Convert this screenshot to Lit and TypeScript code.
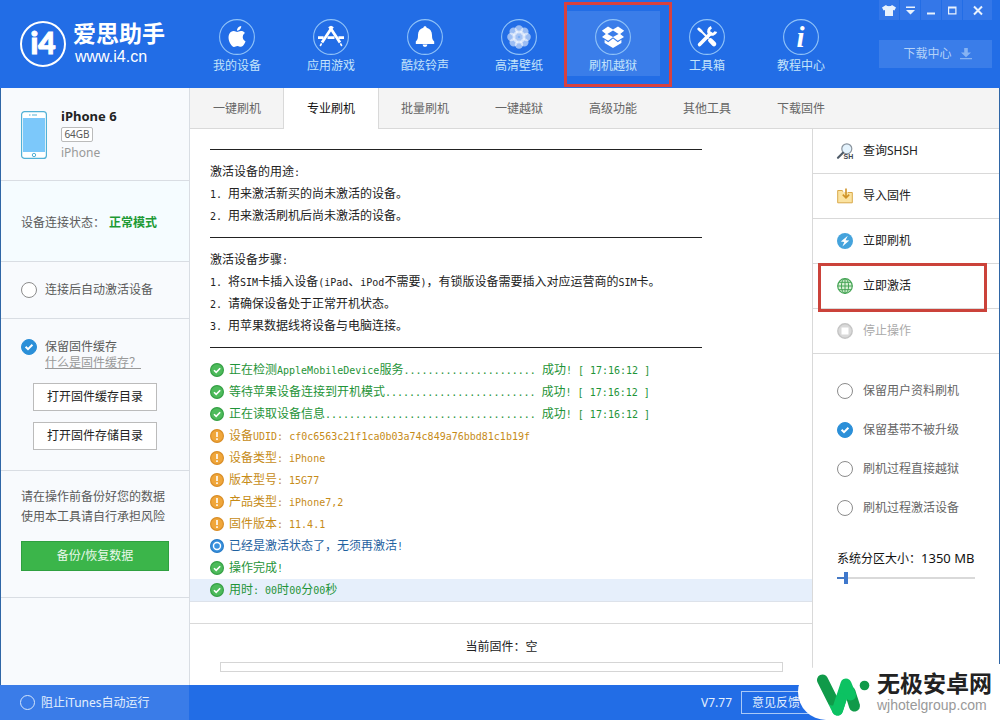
import { LitElement, html, svg, css, TemplateResult } from "lit";
import { customElement } from "lit/decorators.js";
import { classMap } from "lit/directives/class-map.js";

type Tone = "plain" | "ok" | "warn" | "info";

interface LogRow {
  tone: Tone;
  text?: string;
  current?: boolean;
}

const dots = (n: number) => ".".repeat(n);

const LOG: LogRow[] = [
  { tone: "plain" },
  { tone: "plain", text: "激活设备的用途:" },
  { tone: "plain", text: "1. 用来激活新买的尚未激活的设备。" },
  { tone: "plain", text: "2. 用来激活刷机后尚未激活的设备。" },
  { tone: "plain" },
  { tone: "plain", text: "激活设备步骤:" },
  { tone: "plain", text: "1. 将SIM卡插入设备(iPad、iPod不需要)，有锁版设备需要插入对应运营商的SIM卡。" },
  { tone: "plain", text: "2. 请确保设备处于正常开机状态。" },
  { tone: "plain", text: "3. 用苹果数据线将设备与电脑连接。" },
  { tone: "plain" },
  { tone: "ok", text: `正在检测AppleMobileDevice服务${dots(22)} 成功! [ 17:16:12 ]` },
  { tone: "ok", text: `等待苹果设备连接到开机模式${dots(25)} 成功! [ 17:16:12 ]` },
  { tone: "ok", text: `正在读取设备信息${dots(35)} 成功! [ 17:16:12 ]` },
  { tone: "warn", text: "设备UDID: cf0c6563c21f1ca0b03a74c849a76bbd81c1b19f" },
  { tone: "warn", text: "设备类型: iPhone" },
  { tone: "warn", text: "版本型号: 15G77" },
  { tone: "warn", text: "产品类型: iPhone7,2" },
  { tone: "warn", text: "固件版本: 11.4.1" },
  { tone: "info", text: "已经是激活状态了，无须再激活!" },
  { tone: "ok", text: "操作完成!" },
  { tone: "ok", text: "用时: 00时00分00秒", current: true },
];

const petals = [0, 45, 90, 135, 180, 225, 270, 315];

const NAV: { label: string; icon: TemplateResult }[] = [
  {
    label: "我的设备",
    icon: svg`<g transform="translate(7.6 7) scale(.87)"><path d="M12.152 6.896c-.948 0-2.415-1.078-3.96-1.04-2.04.027-3.91 1.183-4.961 3.014-2.117 3.675-.546 9.103 1.519 12.09 1.013 1.454 2.208 3.09 3.792 3.039 1.52-.065 2.09-.987 3.935-.987 1.831 0 2.35.987 3.96.948 1.637-.026 2.676-1.48 3.676-2.948 1.156-1.688 1.636-3.325 1.662-3.415-.039-.013-3.182-1.221-3.22-4.857-.026-3.04 2.48-4.494 2.597-4.559-1.429-2.09-3.623-2.324-4.39-2.376-2-.156-3.675 1.09-4.61 1.09zM15.53 3.83c.843-1.012 1.4-2.427 1.245-3.83-1.207.052-2.662.805-3.532 1.818-.78.896-1.454 2.338-1.273 3.714 1.338.104 2.715-.688 3.559-1.701"/></g>`,
  },
  {
    label: "应用游戏",
    icon: svg`<g fill="none" stroke="#fff"><path stroke-width="2.8" d="M19.6 7.4 9 23.6M16.4 7.4 27 23.6"/><path stroke-width="1.6" d="M8.6 24.4 7.2 27M27.4 24.4 28.8 27"/><path stroke-width="2.6" d="M5 18.6h5.6M14.5 18.6h7M25.4 18.6H31"/></g>`,
  },
  {
    label: "酷炫铃声",
    icon: svg`<path d="M18 7.2c1 0 1.6.6 1.6 1.6 3.500.8 5.400 3.600 5.400 7.200 0 3.200.5 5 2.200 6.600V25H8.800v-2.400C10.500 21 11 19.200 11 16c0-3.600 1.900-6.400 5.400-7.200 0-1 .6-1.600 1.600-1.600z"/><path d="M15.600 25.500h4.800a2.400 2.400 0 0 1-4.800 0z"/>`,
  },
  {
    label: "高清壁纸",
    icon: svg`${petals.map((a) => svg`<circle cx="18" cy="10.400" r="4.200" opacity=".55" transform="rotate(${a} 18 18)"/>`)}<circle cx="18" cy="18" r="6.500" opacity=".6"/><circle cx="18" cy="18" r="1.300" fill="#7fb0f4"/>`,
  },
  {
    label: "刷机越狱",
    icon: svg`<path fill-rule="evenodd" d="M13 7.500 18 10.600 23 7.500 29.200 11.800 25.200 15 29 18 22.800 21.800 18 18.200 13.200 21.800 7 18 10.800 15 6.800 11.800zM18 11.600 12.400 15 18 18 23.600 15z"/><path d="M9.600 20.800 13.200 23.200 18 19.600 22.800 23.200 26.400 20.800V24L18 29 9.600 24z"/>`,
  },
  {
    label: "工具箱",
    icon: svg`<g fill="none" stroke="#fff" stroke-linecap="round"><path stroke-width="3" d="M9.800 10 12 12"/><path stroke-width="1.800" d="M12 12l7 7"/><path stroke-width="4.600" d="M21.400 21.400 25 25"/><path stroke-width="3.600" d="M10.600 25.600 21.500 14.500"/><path stroke-width="3" stroke-linecap="butt" d="M26.800 12.600a4 4 0 0 1-6.600 1.600 4 4 0 0 1 2.200-5.800"/></g>`,
  },
  {
    label: "教程中心",
    icon: svg`<text x="17.500" y="28" text-anchor="middle" font-family="Liberation Serif, serif" font-size="29" font-weight="700" font-style="italic">i</text>`,
  },
];

const TABS = ["一键刷机", "专业刷机", "批量刷机", "一键越狱", "高级功能", "其他工具", "下载固件"];

const ACTIONS: { label: string; icon: TemplateResult; boxed?: boolean; off?: boolean }[] = [
  {
    label: "查询SHSH",
    icon: svg`<circle cx="9.800" cy="5.800" r="5" fill="#e4f3fd" stroke="#8a949e" stroke-width="1.200"/><path d="M6 9.800 1 14.800" stroke="#4f5b68" stroke-width="2.200" stroke-linecap="round"/><text x="6.500" y="15.800" font-family="Liberation Sans, sans-serif" font-size="7" font-weight="700" fill="#3f4650">SH</text>`,
  },
  {
    label: "导入固件",
    icon: svg`<path d="M.7 2.500h4.600l1.400 2H15.300v10.300H.7z" fill="#fbe3a1" stroke="#d9a94a"/><path d="M6 0h5v5H6z" fill="#fff" opacity=".6"/><path d="M9 .5v8.500M5.800 6.600 9 9.800l3.200-3.200" fill="none" stroke="#cf9327" stroke-width="1.600"/>`,
  },
  {
    label: "立即刷机",
    icon: svg`<circle cx="8" cy="8" r="8" fill="#45a3dc"/><path d="M10.800 2.800 3.800 8.400l3.500.5L5.400 13.400 12.300 7.600l-3.700-.4z" fill="#fff"/>`,
  },
  {
    label: "立即激活",
    boxed: true,
    icon: svg`<g fill="none" stroke="#45a455"><circle cx="8" cy="8" r="7.300" fill="#d9f0d6" stroke-width="1.200"/><ellipse cx="8" cy="8" rx="3.600" ry="7.300"/><path d="M8 .7v14.600M.7 8h14.600M2 4.300h12M2 11.700h12"/></g>`,
  },
  {
    label: "停止操作",
    off: true,
    icon: svg`<circle cx="8" cy="8" r="7.200" fill="#d9d9d9" stroke="#c4c4c4" stroke-width="1.400"/><path d="M4.500 4.500h7v7h-7z" fill="#fff"/>`,
  },
];

const OPTIONS = [
  { label: "保留用户资料刷机", on: false },
  { label: "保留基带不被升级", on: true },
  { label: "刷机过程直接越狱", on: false },
  { label: "刷机过程激活设备", on: false },
];

const WINDOW_BUTTONS: { name: string; icon: TemplateResult; wide?: boolean }[] = [
  { name: "皮肤", icon: svg`<path d="M4 1 0 3.500 1.600 6.600 3 6v6h8V6l1.400.6L14 3.500 10 1C9 2.600 5 2.600 4 1z"/>` },
  { name: "菜单", icon: svg`<path d="M3 2.500h9V4H3zM3 6h9l-4.500 4.500z"/>` },
  { name: "最小化", icon: svg`<path d="M3 8.500h8v2H3z"/>` },
  { name: "最大化", icon: svg`<path fill-rule="evenodd" d="M3 2.500h8.500v8H3zM4.200 4.500v4.800h6.100V4.500z"/>` },
  { name: "关闭", icon: svg`<path d="M3 2.500 11 10.500M11 2.500 3 10.500" stroke="#e9f2fd" stroke-width="2"/>`, wide: true },
];

const TONE_ICON: Record<string, TemplateResult> = {
  ok: svg`<circle cx="7" cy="7" r="6.400" fill="#4dbb5b" stroke="#36a046" stroke-width="1.200"/><path d="M4 7.200 6.200 9.400 10.200 5.200" fill="none" stroke="#fff" stroke-width="1.600"/>`,
  warn: svg`<circle cx="7" cy="7" r="6.400" fill="#f0a63a" stroke="#d98e28" stroke-width="1.200"/><path d="M6.200 3h1.600v5H6.200zM6.200 9.300h1.600v1.700H6.200z" fill="#fff"/>`,
  info: svg`<circle cx="7" cy="7" r="6.400" fill="#3a92de" stroke="#2a7dc8" stroke-width="1.200"/><circle cx="7" cy="7" r="3.500" fill="none" stroke="#fff" stroke-width="1.400"/>`,
};

@customElement("app-root")
export class AppRoot extends LitElement {
  static styles = css`
    :host {
      display: flex;
      flex-direction: column;
      position: relative;
      min-height: 100vh;
      overflow: hidden;
      background: #fff;
      color: #222;
      font: 12px/16px "Noto Sans", "Noto Sans CJK SC", sans-serif;
    }
    * {
      box-sizing: border-box;
    }
    button {
      margin: 0;
      padding: 0;
      border: 0;
      background: none;
      font: inherit;
      color: inherit;
    }
    svg {
      display: block;
      flex: none;
    }

    .header {
      display: flex;
      height: 88px;
      background: #226de6;
      color: #fff;
    }
    .brand {
      display: flex;
      flex: 0 0 190px;
      gap: 6px;
      padding: 20px 0 0 19px;
    }
    .brand-name {
      font: 700 23px/26px "Liberation Sans", "Noto Sans CJK SC", sans-serif;
      white-space: nowrap;
    }
    .brand-url {
      padding-left: 2px;
      font: 16px/20px "Liberation Sans", sans-serif;
    }
    .brand-text {
      padding-top: 1px;
    }
    .nav {
      display: flex;
      padding-top: 11px;
    }
    .nav-item {
      position: relative;
      display: flex;
      flex-direction: column;
      align-items: center;
      gap: 3px;
      width: 94px;
      height: 65px;
      padding-top: 8px;
      color: #c4e4fb;
    }
    .nav-item.active {
      background: #3a7de9;
    }
    .nav-item.active::after {
      content: "";
      position: absolute;
      inset: -9px -12px -11px -2px;
      border: 3px solid #d8413f;
    }
    .tools {
      display: flex;
      flex-direction: column;
      gap: 20px;
      margin-left: auto;
      padding-right: 8px;
    }
    .window-buttons {
      display: flex;
      gap: 1px;
    }
    .window-button {
      display: grid;
      place-items: center;
      width: 20px;
      height: 20px;
      background: #3477e8;
      fill: #e9f2fd;
    }
    .window-button.wide {
      width: 29px;
    }
    .download {
      display: flex;
      align-items: center;
      justify-content: center;
      gap: 8px;
      height: 28px;
      padding-left: 4px;
      background: #3a7de9;
      color: #b4d2f8;
    }

    .body {
      display: flex;
      flex: 1;
      border: solid #2f66a6;
      border-width: 0 1px;
    }
    .sidebar {
      flex: 0 0 189px;
      border-right: 1px solid #d9dde3;
      background: #f8fafd;
      color: #5a5a5a;
    }
    .section {
      border-bottom: 1px solid #d9dde3;
      padding: 20px;
    }
    .device {
      display: flex;
      gap: 14px;
      height: 93px;
    }
    .device-icon {
      margin-top: 3px;
    }
    .device-name {
      font-size: 13px;
      font-weight: 700;
      line-height: 17px;
      color: #222;
    }
    .badge {
      display: block;
      width: 32px;
      margin: 2px 0;
      border: 1px solid #bbb;
      border-radius: 2px;
      background: #fff;
      font-size: 10px;
      line-height: 13px;
      text-align: center;
    }
    .device-kind {
      line-height: 18px;
      color: #999;
    }
    .status {
      display: flex;
      align-items: center;
      gap: 4px;
      height: 81px;
      padding: 23px 20px 20px;
      background: #f5fcff;
      white-space: nowrap;
    }
    .status-value {
      font-weight: 700;
      color: #1d9a35;
    }
    .check {
      display: flex;
      align-items: center;
      gap: 8px;
      white-space: nowrap;
    }
    .check input {
      appearance: none;
      flex: none;
      width: 16px;
      height: 16px;
      margin: 0;
      border: 1px solid #8c8c8c;
      border-radius: 50%;
      background: #fff;
    }
    .check input:checked {
      border-color: #2b8fd8;
      background: #2b8fd8
        url("data:image/svg+xml,%3Csvg xmlns='http://www.w3.org/2000/svg' viewBox='0 0 14 14'%3E%3Cpath d='M3.600 6.800 6 9.200l4.400-4.400' fill='none' stroke='%23fff' stroke-width='2'/%3E%3C/svg%3E");
    }
    .auto {
      height: 57px;
    }
    .cache {
      display: flex;
      flex-direction: column;
      height: 152px;
    }
    .cache-link {
      margin-left: 24px;
      color: #999;
      text-decoration: underline;
    }
    .cache-buttons {
      display: flex;
      flex-direction: column;
      gap: 11px;
      padding: 12px 12px 0;
    }
    .folder-button {
      height: 28px;
      border: 1px solid #bbb;
      background: #fff;
      color: #222;
    }
    .backup {
      height: 127px;
      padding-top: 16px;
      line-height: 20px;
      white-space: nowrap;
    }
    .backup-button {
      display: block;
      width: 100%;
      height: 30px;
      margin-top: 14px;
      border: 1px solid #2fa040;
      background: #3bb54a;
      color: #eaf9ec;
    }

    .content {
      display: flex;
      flex: 1;
      flex-direction: column;
      min-width: 0;
    }
    .tabs {
      display: flex;
      height: 41px;
      border-bottom: 1px solid #d9d9d9;
      background: #f4f4f4;
    }
    .tab {
      width: 94px;
      height: 41px;
      color: #666;
    }
    .tab.active {
      width: 96px;
      margin: 0 -1px;
      border: solid #d9d9d9;
      border-width: 0 1px;
      background: #fff;
      color: #111;
    }
    .columns {
      display: flex;
      flex: 1;
    }
    .main {
      display: flex;
      flex: 1;
      flex-direction: column;
      min-width: 0;
    }
    .log {
      flex: 1;
      padding-top: 10px;
    }
    .row {
      display: flex;
      align-items: center;
      gap: 5px;
      height: 22px;
      padding-left: 20px;
      white-space: pre;
    }
    .row.current {
      background: #e6effb;
      box-shadow: 0 1px #dde2ea;
    }
    .row.ok {
      color: #1f9438;
    }
    .row.warn {
      color: #c68b17;
    }
    .row.info {
      color: #1f62a0;
    }
    .rule {
      width: 492px;
      height: 1px;
      margin: 0 0 2px;
      border: 0;
      background: #222;
    }
    .mono {
      font-family: "DejaVu Sans Mono", monospace;
      font-size: 10px;
    }
    .firmware {
      display: flex;
      flex-direction: column;
      align-items: center;
      gap: 7px;
      height: 62px;
      padding: 15px 29px 0 30px;
      border-top: 1px solid #d9d9d9;
    }
    .progress {
      appearance: none;
      width: 100%;
      height: 10px;
      border: 1px solid #d5d5d5;
      background: #fff;
    }
    .progress::-webkit-progress-bar {
      background: #fff;
    }

    .aside {
      flex: 0 0 187px;
      border-left: 1px solid #d9d9d9;
    }
    .action {
      position: relative;
      display: flex;
      align-items: center;
      gap: 10px;
      width: 100%;
      height: 45px;
      padding-left: 24px;
      border-bottom: 1px solid #d9d9d9;
      text-align: left;
    }
    .action.off {
      color: #aaa;
    }
    .action.boxed::after {
      content: "";
      position: absolute;
      z-index: 1;
      inset: -1px 12px -4px 5px;
      border: 3px solid #cb423a;
    }
    .options {
      display: flex;
      flex-direction: column;
      gap: 23px;
      padding: 29px 0 0 24px;
      color: #666;
    }
    .options .check {
      gap: 10px;
    }
    .partition {
      display: flex;
      flex-direction: column;
      gap: 5px;
      padding: 34px 24px 0;
      color: #111;
      white-space: nowrap;
    }
    .slider {
      appearance: none;
      width: 138px;
      height: 12px;
      margin: 0;
      background: linear-gradient(#4579c4, #4579c4) 0 5px / 8px 2px no-repeat,
        linear-gradient(#d9d9d9, #d9d9d9) 0 5px / 100% 2px no-repeat;
    }
    .partition-size {
      font-size: 13px;
    }
    .slider::-webkit-slider-thumb {
      appearance: none;
      width: 4px;
      height: 12px;
      background: #3f78cc;
    }

    .footer {
      display: flex;
      align-items: center;
      height: 35px;
      background: #226de6;
      color: #e3effd;
    }
    .footer-left {
      display: flex;
      align-items: center;
      flex: 0 0 189px;
      height: 35px;
      padding-left: 20px;
      background: #3a7ce8;
    }
    .footer-left .check {
      gap: 6px;
    }
    .footer-left .check input {
      width: 15px;
      height: 15px;
      border-color: #d5e6fc;
      background: none;
    }
    .version {
      margin-left: auto;
      padding-right: 9px;
    }
    .feedback {
      width: 70px;
      height: 23px;
      margin-right: 189px;
      border: 1px solid #a9c9f7;
    }

    .watermark {
      position: absolute;
      right: 0;
      bottom: 0;
      display: flex;
      align-items: center;
      gap: 7px;
      height: 56px;
      padding: 0 8px 0 18px;
      border-radius: 28px 0 0 28px;
      background: #fff;
    }
    .mark-name {
      font: 700 23px/26px "Liberation Sans", "Noto Sans CJK SC", sans-serif;
      white-space: nowrap;
      color: #222;
    }
    .mark-url {
      font: 14px/16px "Liberation Sans", sans-serif;
      color: #999;
    }
  `;

  private mixed(text: string) {
    return text
      .split(/([\x20-\x7e]+)/)
      .filter(Boolean)
      .map((part) => (/^[\x20-\x7e]/.test(part) ? html`<span class="mono">${part}</span>` : part));
  }

  private logRow(row: LogRow) {
    const classes = { row: true, [row.tone]: true, current: !!row.current };
    if (!row.text) return html`<div class=${classMap(classes)}><hr class="rule" /></div>`;
    return html`<div class=${classMap(classes)}>${row.tone === "plain"
      ? ""
      : html`<svg width="14" height="14" viewBox="0 0 14 14" aria-hidden="true">${TONE_ICON[row.tone]}</svg>`}<span>${this.mixed(row.text)}</span></div>`;
  }

  private check(label: string, on = false) {
    return html`<label class="check"><input type="checkbox" .checked=${on} />${label}</label>`;
  }

  render() {
    return html`
      <header class="header">
        <div class="brand">
          <svg width="48" height="48" viewBox="0 0 48 48" aria-hidden="true">
            <circle cx="24" cy="24" r="22" fill="none" stroke="#fff" stroke-width="2" />
            <text x="24" y="34" text-anchor="middle" fill="#fff" stroke="#fff" stroke-width="1" font-family="Lato, sans-serif" font-size="30" font-weight="900">i4</text>
          </svg>
          <div class="brand-text">
            <div class="brand-name">爱思助手</div>
            <div class="brand-url">www.i4.cn</div>
          </div>
        </div>
        <nav class="nav">
          ${NAV.map(
            (item, i) => html`<button class=${classMap({ "nav-item": true, active: i === 4 })}>
              <svg width="36" height="36" viewBox="0 0 36 36" fill="#fff" aria-hidden="true">
                <circle cx="18" cy="18" r="17.400" fill="none" stroke="#8fc2f8" stroke-width="1.100" />
                ${item.icon}
              </svg>
              <span>${item.label}</span>
            </button>`
          )}
        </nav>
        <div class="tools">
          <div class="window-buttons">
            ${WINDOW_BUTTONS.map(
              (b) => html`<button class=${classMap({ "window-button": true, wide: !!b.wide })} aria-label=${b.name}>
                <svg width="14" height="13" viewBox="0 0 14 13">${b.icon}</svg>
              </button>`
            )}
          </div>
          <button class="download">
            下载中心
            <svg width="12" height="12" viewBox="0 0 12 12" fill="#86b3f3" aria-hidden="true">
              <path d="M4.200 0h3.600v4.500H11L6 9.200 1 4.500h3.200zM0 10h12v1.200H0z" />
            </svg>
          </button>
        </div>
      </header>

      <div class="body">
        <aside class="sidebar">
          <div class="section device">
            <svg class="device-icon" width="26" height="48" viewBox="0 0 26 48" aria-hidden="true">
              <rect x=".6" y=".6" width="24.800" height="46.800" rx="3" fill="#fff" stroke="#52b1d6" stroke-width="1.200" />
              <path d="M2 7h22v34H2z" fill="#7cc8fa" />
              <path d="M8 4h1.500M11 4h5" stroke="#52b1d6" />
              <circle cx="13" cy="44" r="1.700" fill="none" stroke="#52b1d6" />
            </svg>
            <div>
              <div class="device-name">iPhone 6</div>
              <span class="badge">64GB</span>
              <div class="device-kind">iPhone</div>
            </div>
          </div>
          <div class="section status">
            <span>设备连接状态：</span><span class="status-value">正常模式</span>
          </div>
          <div class="section auto">${this.check("连接后自动激活设备")}</div>
          <div class="section cache">
            ${this.check("保留固件缓存", true)}
            <a class="cache-link" href="#">什么是固件缓存？</a>
            <div class="cache-buttons">
              <button class="folder-button">打开固件缓存目录</button>
              <button class="folder-button">打开固件存储目录</button>
            </div>
          </div>
          <div class="section backup">
            请在操作前备份好您的数据<br />使用本工具请自行承担风险
            <button class="backup-button">备份/恢复数据</button>
          </div>
        </aside>

        <div class="content">
          <nav class="tabs">
            ${TABS.map((t, i) => html`<button class=${classMap({ tab: true, active: i === 1 })}>${t}</button>`)}
          </nav>
          <div class="columns">
            <main class="main">
              <div class="log">${LOG.map((r) => this.logRow(r))}</div>
              <div class="firmware">
                <label for="flash-progress">当前固件：空</label>
                <progress id="flash-progress" class="progress" value="0" max="100"></progress>
              </div>
            </main>
            <aside class="aside">
              ${ACTIONS.map(
                (a) => html`<button class=${classMap({ action: true, boxed: !!a.boxed, off: !!a.off })} ?disabled=${!!a.off}>
                  <svg width="16" height="16" viewBox="0 0 16 16" overflow="visible" aria-hidden="true">${a.icon}</svg>
                  <span>${a.label}</span>
                </button>`
              )}
              <div class="options">${OPTIONS.map((o) => this.check(o.label, o.on))}</div>
              <div class="partition">
                <label for="partition">系统分区大小：<span class="partition-size">1350 MB</span></label>
                <input id="partition" class="slider" type="range" min="0" max="100" value="5" />
              </div>
            </aside>
          </div>
        </div>
      </div>

      <footer class="footer">
        <div class="footer-left">${this.check("阻止iTunes自动运行")}</div>
        <span class="version">V7.77</span>
        <button class="feedback">意见反馈</button>
      </footer>

      <div class="watermark">
        <svg width="54" height="48" viewBox="0 0 54 48" aria-hidden="true">
          <g fill="none" stroke-width="11" stroke-linecap="round" stroke-linejoin="round">
            <path d="M34 24 38.500 38" stroke="#109a49" />
            <path d="M17.500 34 21.500 42 30 16 34.500 27" stroke="#0cc262" />
            <path d="M6.500 12 16.500 32" stroke="#109a49" />
            <path d="M21.500 42 25 31" stroke="#0cc262" />
          </g>
          <circle cx="48.500" cy="17.500" r="4.800" fill="#109a49" />
        </svg>
        <div>
          <div class="mark-name">无极安卓网</div>
          <div class="mark-url">wjhotelgroup.com</div>
        </div>
      </div>
    `;
  }
}
